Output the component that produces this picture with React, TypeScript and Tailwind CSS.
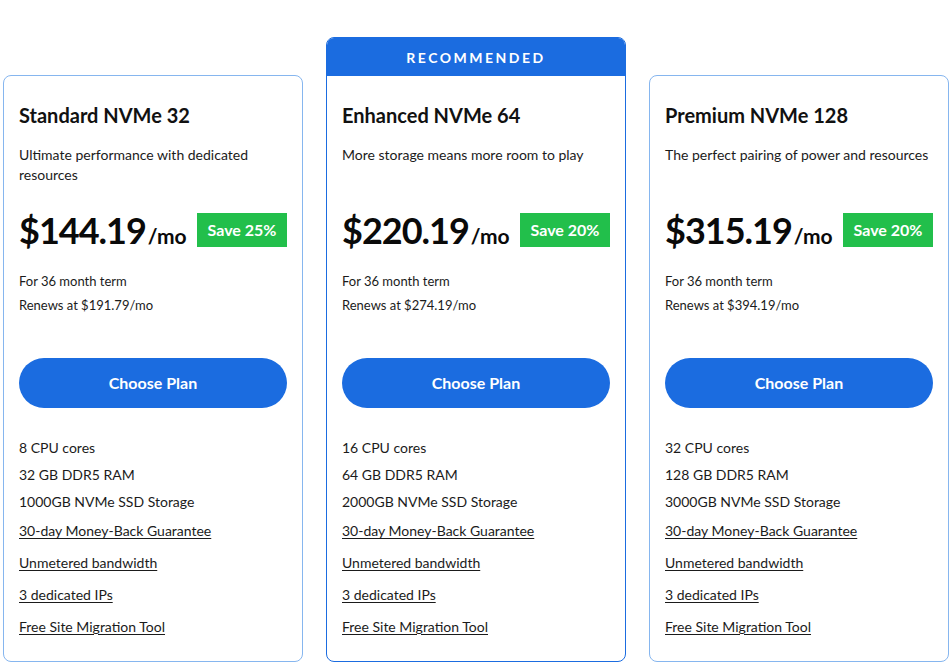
const plans = [
  {
    name: 'Standard NVMe 32',
    desc: 'Ultimate performance with dedicated resources',
    price: '$144.19',
    save: 'Save 25%',
    renews: 'Renews at $191.79/mo',
    cpu: '8 CPU cores',
    ram: '32 GB DDR5 RAM',
    storage: '1000GB NVMe SSD Storage',
  },
  {
    name: 'Enhanced NVMe 64',
    desc: 'More storage means more room to play',
    price: '$220.19',
    save: 'Save 20%',
    renews: 'Renews at $274.19/mo',
    cpu: '16 CPU cores',
    ram: '64 GB DDR5 RAM',
    storage: '2000GB NVMe SSD Storage',
    recommended: true,
  },
  {
    name: 'Premium NVMe 128',
    desc: 'The perfect pairing of power and resources',
    price: '$315.19',
    save: 'Save 20%',
    renews: 'Renews at $394.19/mo',
    cpu: '32 CPU cores',
    ram: '128 GB DDR5 RAM',
    storage: '3000GB NVMe SSD Storage',
  },
];

type Plan = (typeof plans)[number];

const links = ['30-day Money-Back Guarantee', 'Unmetered bandwidth', '3 dedicated IPs', 'Free Site Migration Tool'];

const PlanBody = ({ plan }: { plan: Plan }) => (
  <div className="flex flex-col px-[15px] pt-[25px] pb-[18px]">
    <h3 className="text-[20px] leading-[28px] font-bold text-[#111]">{plan.name}</h3>
    <p className="mt-4 min-h-[40px] text-[14px] leading-[20px] text-[#1b1b1b]">{plan.desc}</p>
    <div className="mt-[23px] flex h-[44px] items-center justify-between">
      <div className="flex items-baseline text-[#0a0a0a]">
        <span className="text-[36px] font-bold tracking-[-1px]">{plan.price}</span>
        <span className="ml-[2px] text-[21px] font-bold">/mo</span>
      </div>
      <span className="flex h-[34px] w-[90px] items-center justify-center bg-[#22bf4b] text-[16px] font-bold text-white">
        {plan.save}
      </span>
    </div>
    <div className="mt-[17px] text-[13px] leading-6 text-[#1b1b1b]">
      <p>For 36 month term</p>
      <p>{plan.renews}</p>
    </div>
    <button className="mt-[41px] h-[50px] w-full rounded-full bg-[#1b6ce0] text-[16px] font-bold text-white">
      Choose Plan
    </button>
    <ul className="mt-[26px] text-[14px] text-[#1b1b1b]">
      <li className="leading-[27px]">{plan.cpu}</li>
      <li className="leading-[27px]">{plan.ram}</li>
      <li className="leading-[27px]">{plan.storage}</li>
      {links.map((l) => (
        <li key={l} className="leading-[32px]">
          <a className="underline underline-offset-2">{l}</a>
        </li>
      ))}
    </ul>
  </div>
);

export default function App() {
  return (
    <div className="min-h-[667px] bg-white font-['Lato',sans-serif]">
      <div className="flex gap-[23px] px-[3px] pt-[37px]">
        {plans.map((plan) =>
          plan.recommended ? (
            <div key={plan.name} className="w-[300px] overflow-hidden rounded-lg border border-[#1b6ce0]">
              <div className="flex h-[38px] items-center justify-center bg-[#1b6ce0] text-[14px] font-bold tracking-[2.5px] text-white">
                RECOMMENDED
              </div>
              <PlanBody plan={plan} />
            </div>
          ) : (
            <div key={plan.name} className="mt-[38px] w-[300px] rounded-lg border border-[#86b6ef]">
              <PlanBody plan={plan} />
            </div>
          )
        )}
      </div>
    </div>
  );
}
